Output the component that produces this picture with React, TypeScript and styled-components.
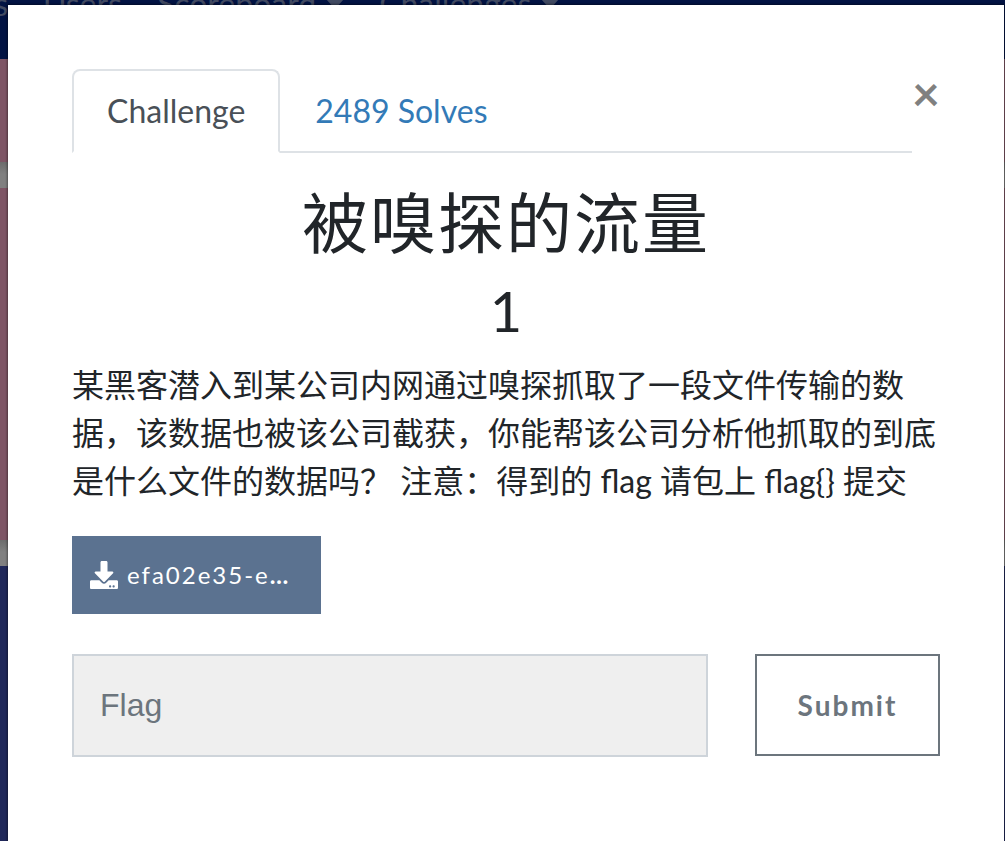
import React from "react";
import styled, { createGlobalStyle } from "styled-components";
import { FaDownload } from "react-icons/fa";

const GlobalStyle = createGlobalStyle`
  *, *::before, *::after { box-sizing: border-box; }
  html, body, #root { height: 100%; }
  body {
    margin: 0;
    overflow: hidden;
    color: #212529;
    font-family: Lato, "Noto Sans CJK SC", sans-serif;
    font-size: 32px;
    line-height: 48px;
  }
`;

const Page = styled.div`
  position: relative;
  height: 100%;
  overflow: hidden;
  background: #20285a;
`;

const Navbar = styled.nav`
  display: flex;
  align-items: flex-start;
  gap: 35px;
  height: 59px;
  background: #021343;
  overflow: hidden;
`;

const NavLink = styled.a`
  display: flex;
  align-items: center;
  gap: 10px;
  height: 28px;
  margin-top: -10px;
  color: #414a62;
  font-size: 32px;
  line-height: 28px;
  text-decoration: none;

  &:first-child {
    width: 8px;
    justify-content: flex-end;
  }
`;

const Caret = () => (
  <svg width="18" height="10" viewBox="0 0 18 10" aria-hidden="true">
    <path d="M0 0h18L9 10z" fill="currentColor" />
  </svg>
);

const Band = styled.div<{ $height: number; $gap?: boolean }>`
  height: ${(p) => p.$height}px;
  background: ${(p) => (p.$gap ? "linear-gradient(#6c6c6c, #808080 12px)" : "#7e5565")};
`;

const Modal = styled.div`
  position: absolute;
  inset: 5px 1px 0 8px;
  padding: 64px;
  background: #fff;
  box-shadow: 0 0 2px 1px rgba(0, 0, 0, 0.4);
`;

const Header = styled.header`
  display: flex;
  align-items: flex-start;
`;

const Tabs = styled.ul`
  display: flex;
  flex: 1;
  margin: 0;
  padding: 0;
  list-style: none;
  border-bottom: 2px solid #dee2e6;
`;

const Tab = styled.a<{ $active?: boolean }>`
  display: block;
  margin-bottom: -2px;
  padding: 16px 33px;
  border: 2px solid;
  border-color: ${(p) => (p.$active ? "#dee2e6 #dee2e6 #fff" : "transparent")};
  border-radius: 8px 8px 0 0;
  background: ${(p) => (p.$active ? "#fff" : "transparent")};
  color: ${(p) => (p.$active ? "#495057" : "#337ab7")};
  text-decoration: none;
`;

const Close = styled.button`
  width: 28px;
  padding: 0;
  border: 0;
  background: none;
  color: #808080;
  font: 700 48px/48px Lato, sans-serif;
`;

const Title = styled.h2`
  margin: 32px 0 16px;
  font-size: 66px;
  font-weight: 400;
  line-height: 76px;
  letter-spacing: 2px;
  text-align: center;
`;

const Points = styled.h3`
  margin: 0 0 16px;
  font-size: 56px;
  font-weight: 400;
  line-height: 68px;
  text-align: center;
`;

const Description = styled.p`
  margin: 0 0 31px;
`;

const FileLink = styled.a`
  display: flex;
  align-items: center;
  gap: 9px;
  width: 249px;
  height: 78px;
  padding: 0 18px;
  background: #5b7290;
  color: #fff;
  font-size: 24px;
  letter-spacing: 2px;
  text-decoration: none;

  svg {
    width: 28px;
    height: 28px;
  }
`;

const Form = styled.form`
  display: grid;
  grid-template-columns: minmax(0, 1fr) 185px;
  align-items: start;
  gap: 47px;
  margin-top: 40px;
`;

const FlagInput = styled.input`
  width: 100%;
  height: 103px;
  padding: 0 26px;
  border: 2px solid #ced4da;
  border-radius: 0;
  background: #efefef;
  font: 32px "Liberation Sans", sans-serif;

  &::placeholder {
    color: #6c757d;
    opacity: 1;
  }
`;

const Submit = styled.button`
  height: 102px;
  padding: 0;
  border: 2px solid #6c757d;
  background: #fff;
  color: #6c757d;
  font: 700 28px Lato, sans-serif;
  letter-spacing: 2px;
`;

export default function App() {
  return (
    <>
      <GlobalStyle />
      <Page>
        <Navbar>
          <NavLink href="#teams">s</NavLink>
          <NavLink href="#users">Users</NavLink>
          <NavLink href="#scoreboard">
            Scoreboard <Caret />
          </NavLink>
          <NavLink href="#challenges">
            Challenges <Caret />
          </NavLink>
        </Navbar>
        <Band $height={103} />
        <Band $height={26} $gap />
        <Band $height={352} />
        <Band $height={26} $gap />
        <Modal role="dialog" aria-labelledby="challenge-title">
          <Header>
            <Tabs>
              <li>
                <Tab href="#challenge" $active>
                  Challenge
                </Tab>
              </li>
              <li>
                <Tab href="#solves">2489 Solves</Tab>
              </li>
            </Tabs>
            <Close type="button" aria-label="Close">
              ×
            </Close>
          </Header>
          <Title id="challenge-title">被嗅探的流量</Title>
          <Points>1</Points>
          <Description>
            某黑客潜入到某公司内网通过嗅探抓取了一段文件传输的数据，该数据也被该公司截获，你能帮该公司分析他抓取的到底是什么文件的数据吗？
            注意：得到的 flag 请包上 flag{"{}"} 提交
          </Description>
          <FileLink href="#file">
            <FaDownload />
            <span>
              efa02e35-e<b>…</b>
            </span>
          </FileLink>
          <Form>
            <FlagInput type="text" placeholder="Flag" aria-label="Flag" />
            <Submit type="button">Submit</Submit>
          </Form>
        </Modal>
      </Page>
    </>
  );
}
